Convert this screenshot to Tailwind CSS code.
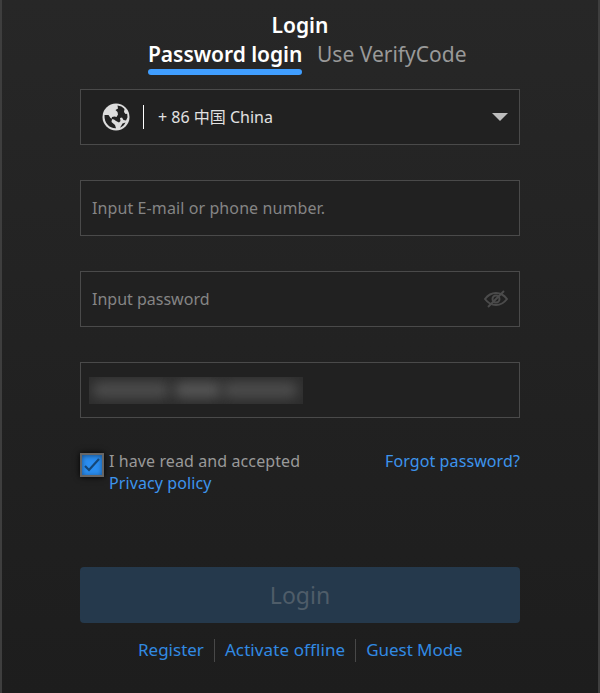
<!DOCTYPE html>
<html lang="en">
<head>
  <meta charset="UTF-8">
  <meta name="viewport" content="width=device-width, initial-scale=1.0">
  <title>Login</title>
  <script src="https://cdn.jsdelivr.net/npm/@tailwindcss/browser@4"></script>
</head>
<body class="font-['Noto_Sans','Noto_Sans_CJK_SC',sans-serif] bg-[#1d1d1d]">
  <div class="h-[693px] w-[600px] overflow-hidden border-x-2 border-[#3e3e3e] bg-linear-to-b from-[#272727] to-[#1d1d1d] px-[78px]">
    <h1 class="pt-[10px] text-center text-[21px] leading-[30px] font-semibold text-white">Login</h1>
    <div class="flex pl-[68px] text-[21px] leading-[29px]">
      <button class="h-[35px] w-[154px] rounded-b-[3px] text-left font-semibold whitespace-nowrap text-white">
        <span class="block h-[29px] tracking-[-0.05px]">Password login</span>
        <span class="block h-[6px] rounded-[3px] bg-[#409eff]"></span>
      </button>
      <button class="ml-[15px] h-[29px] whitespace-nowrap text-[#999]">Use VerifyCode</button>
    </div>

    <form class="mt-[14px]">
      <div class="flex h-14 items-center border border-[#4a4a4a] bg-[#212121] pr-[11px] pl-[21px] text-[#e2e2e2]">
        <svg class="size-7" viewBox="0 0 28 28">
          <circle cx="14" cy="14" r="13.5" fill="#ddd"/>
          <path d="M2.500 12 6.500 12l2 3 1.500 1-.5 3 3.500 3 1 3.300C7.500 25.500 2 20 2.500 12Z" fill="#212121"/>
          <path d="M15.500 2.500c3 .3 5.300 1.500 7 3.500l-.5 3 1.500 2 1.700-.3.3 3.500-1.500 3.300-2.500-.5-1.500-2.500-2 .5.500 3-1.500 1.500-3-1.500-2-1.500-2.500-.5.500-2 2.500-.5 2 .5 1.500-2.500-.5-2.500-2-2 2.500-1.500Z" fill="#212121"/>
          <path d="m20.500 20.500 3-1c-1.200 2.500-3 4.200-5.500 5.300Z" fill="#212121"/>
        </svg>
        <span class="ml-[13px] h-6 w-px bg-white"></span>
        <span class="ml-[14px] grow text-[16px]">+ 86 中国 China</span>
        <svg class="h-2 w-4" viewBox="0 0 16 8"><path d="M0 0h16L8 8Z" fill="#bdbdbd"/></svg>
      </div>
      <input type="text" class="mt-[35px] block h-14 w-full border border-[#4a4a4a] bg-[#212121] px-[11px] text-[16px] tracking-[0.1px] placeholder:text-[#858585]" placeholder="Input E-mail or phone number.">
      <div class="mt-[35px] flex h-14 items-center border border-[#4a4a4a] bg-[#212121] px-[11px]">
        <input type="password" class="min-w-0 grow text-[16px] placeholder:text-[#858585]" placeholder="Input password">
        <svg class="h-[18px] w-6" viewBox="0 0 24 18" fill="none" stroke="#4b4b4b" stroke-width="2">
          <path d="M1 9q4.500-6 11-6t11 6q-4.500 6-11 6T1 9Z"/>
          <circle cx="12" cy="9" r="3.500"/>
          <path d="M4 17 20 1"/>
        </svg>
      </div>
      <div class="mt-[35px] flex h-14 items-center border border-[#4a4a4a] bg-[#212121] px-2">
        <div class="flex h-[27px] w-[214px] items-center overflow-hidden bg-[#2d2d2d] px-[3px]">
          <span class="h-4 w-[78px] rounded-full bg-[#4c4c4c] blur-[6px]"></span>
          <span class="ml-1 h-4 w-[48px] rounded-full bg-[#555] blur-[6px]"></span>
          <span class="h-4 w-[76px] rounded-full bg-[#4c4c4c] blur-[6px]"></span>
        </div>
      </div>

      <div class="mt-[32px] flex h-[44px] text-[16px] leading-[22px] tracking-[0.1px] text-[#999]">
        <span class="mt-[3px] flex size-6 shrink-0 items-center justify-center border-2 border-[#666] bg-[#2b8ef0] shadow-[0_0_6px_#000] inset-shadow-[0_1px_5px_#174f88]">
          <svg class="h-4 w-[18px]" viewBox="0 0 18 16" fill="none" stroke="#154777" stroke-width="2.200"><path d="m2 9 4 4L16 2"/></svg>
        </span>
        <div class="ml-[5px] grow">
          <p>I have read and accepted</p>
          <a class="text-[#3d94ed]">Privacy policy</a>
        </div>
        <a class="text-[#3d94ed]">Forgot password?</a>
      </div>

      <button type="button" class="mt-[73px] block h-14 w-full rounded-[4px] bg-[#25394c] text-[23px] text-[#4f5d69]">Login</button>
    </form>
    <div class="mt-[15px] flex h-6 items-center pl-[58px] text-[17px] whitespace-nowrap text-[#318ae3]">
      <a class="pr-[10px]">Register</a>
      <span class="h-[23px] w-px bg-[#484848]"></span>
      <a class="px-[10px] tracking-[0.1px]">Activate offline</a>
      <span class="h-[23px] w-px bg-[#484848]"></span>
      <a class="pl-[10px] tracking-[-0.05px]">Guest Mode</a>
    </div>
  </div>
</body>
</html>
